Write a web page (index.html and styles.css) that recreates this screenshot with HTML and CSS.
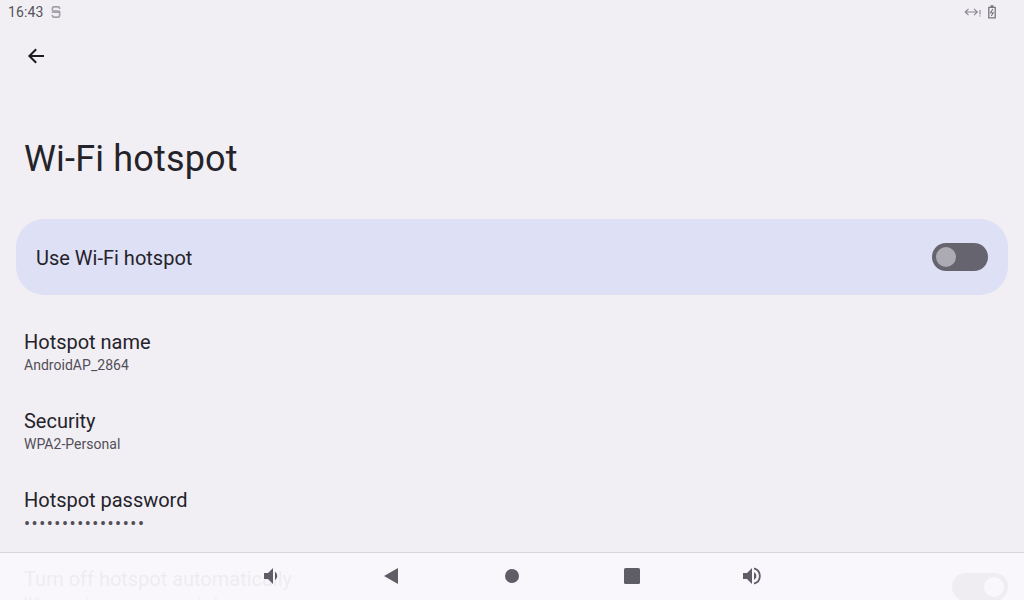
FILE: index.html
```html
<!DOCTYPE html>
<html lang="en">
<head>
<meta charset="utf-8">
<title>Wi-Fi hotspot</title>
<link rel="stylesheet" href="styles.css">
</head>
<body>
<div class="screen">
  <header class="status">
    <div class="status-left">
      <span class="clock">16:43</span>
      <svg class="status-s" viewBox="0 0 10 14" width="10" height="14"><path d="M8.600 4V3.200Q8.600 1.800 7.200 1.800H2.800Q1.400 1.800 1.400 3.200V4.800Q1.400 6.200 2.800 6.200H7.200Q8.600 6.200 8.600 7.600V10.800Q8.600 12.200 7.200 12.200H2.800Q1.400 12.200 1.400 10.800V10" fill="none" stroke="#a3a2a8" stroke-width="1.700"/><path d="M.6 7.300H9.400" stroke="#a3a2a8" stroke-width="1.300"/></svg>
    </div>
    <div class="status-right">
      <svg viewBox="0 0 18 12" width="18" height="12"><path d="M4.500 2.800 1.200 6l3.300 3.200M1.500 6H13M10 2.800 13.300 6 10 9.200" fill="none" stroke="#87868d" stroke-width="1.100"/><path d="M16 4v4.400M16 9.600v1" stroke="#87868d" stroke-width="1.100"/></svg>
      <svg viewBox="0 0 10 14" width="10" height="14"><path d="M3.500 1h3M1.800 2.400h6.400v10.400H1.800z" fill="none" stroke="#77767d" stroke-width="1.300"/><path d="M5.800 4 3.600 7.800h2.600L4.300 11" fill="none" stroke="#77767d" stroke-width="1.100"/></svg>
    </div>
  </header>

  <div class="toolbar">
    <svg class="back" viewBox="0 0 24 24" width="24" height="24"><path d="M20 12H5.600M12.200 5.200 5.400 12l6.800 6.800" fill="none" stroke="#1d1b20" stroke-width="2"/></svg>
  </div>

  <h1 class="title">Wi-Fi hotspot</h1>

  <section class="main-switch">
    <span class="main-label">Use Wi-Fi hotspot</span>
    <span class="switch switch-main"><span class="thumb"></span></span>
  </section>

  <ul class="prefs">
    <li class="pref"><span class="pref-title">Hotspot name</span><span class="pref-sub">AndroidAP_2864</span></li>
    <li class="pref"><span class="pref-title">Security</span><span class="pref-sub">WPA2-Personal</span></li>
    <li class="pref"><span class="pref-title">Hotspot password</span><span class="pref-sub pref-dots">••••••••••••••••</span></li>
    <li class="pref pref-toggle">
      <div class="pref-text"><span class="pref-title">Turn off hotspot automatically</span><span class="pref-sub pref-sub-low">When no devices are connected</span></div>
      <span class="switch switch-auto"><span class="thumb"></span></span>
    </li>
  </ul>

  <nav class="navbar">
    <svg class="vol-down" viewBox="0 0 24 24" width="24" height="24"><path d="M3 9v6h4l5 5V4L7 9z" fill="#5f5e66"/><path d="M14 7.800a5 5 0 0 1 0 8.400z" fill="#5f5e66"/></svg>
    <svg class="nav-back" viewBox="0 0 24 24" width="24" height="24"><path d="M18 4v16L4 12z" fill="#5f5e66"/></svg>
    <svg class="nav-home" viewBox="0 0 24 24" width="24" height="24"><circle cx="12" cy="12" r="7" fill="#5f5e66"/></svg>
    <svg class="nav-recent" viewBox="0 0 24 24" width="24" height="24"><rect x="4" y="4" width="16" height="16" rx="1.500" fill="#5f5e66"/></svg>
    <svg class="vol-up" viewBox="0 0 24 24" width="24" height="24"><path d="M3 9v6h4l5 5V4L7 9z" fill="#5f5e66"/><path d="M14 8a4.500 4.500 0 0 1 0 8z" fill="#5f5e66"/><path d="M14 4.300a8 8 0 0 1 0 15.400" fill="none" stroke="#5f5e66" stroke-width="1.800"/></svg>
  </nav>
</div>
</body>
</html>
```
FILE: styles.css
```css
* { box-sizing: border-box; }
html, body { margin: 0; padding: 0; }
body {
  width: 1024px;
  height: 600px;
  overflow: hidden;
  background: #f1eff4;
  font-family: Roboto, "Noto Sans", sans-serif;
  color: #25232a;
}
.screen { position: relative; width: 1024px; height: 600px; overflow: hidden; }
.status {
  height: 24px;
  padding: 0 27px 0 8px;
  display: flex;
  justify-content: space-between;
  align-items: center;
}
.status-left, .status-right { display: flex; align-items: center; }
.status-left { gap: 8px; }
.status-right { gap: 5px; }
.clock { font-size: 14px; color: #55525b; letter-spacing: 0.1px; }
.toolbar { height: 64px; padding: 20px 0 0 24px; }
.back { display: block; }
.title {
  margin: 0;
  padding: 47px 24px 0;
  height: 131px;
  font-size: 36px;
  line-height: 48px;
  font-weight: 400;
  letter-spacing: 0.17px;
}
.main-switch {
  margin: 0 16px;
  height: 76px;
  border-radius: 28px;
  background: #dee0f6;
  padding: 0 20px;
  display: flex;
  align-items: center;
  justify-content: space-between;
}
.main-label { font-size: 20px; line-height: 28px; padding-top: 2px; }
.switch {
  display: flex;
  align-items: center;
  flex: none;
  width: 56px;
  height: 28px;
  border-radius: 14px;
  padding: 0 4px;
}
.thumb { display: block; width: 20px; height: 20px; border-radius: 50%; }
.switch-main { background: #66646f; }
.switch-main .thumb { background: #acaab3; }
.switch-auto { background: #3d3b47; justify-content: flex-end; margin-top: 8px; }
.switch-auto .thumb { background: #fff; }
.prefs { list-style: none; margin: 0; padding: 33px 0 0; }
.pref {
  display: flex;
  flex-direction: column;
  height: 79px;
  padding: 0 24px;
}
.pref-title { font-size: 20px; line-height: 28px; letter-spacing: -0.02px; }
.pref-sub { font-size: 14px; line-height: 18px; color: #524e58; letter-spacing: 0.03px; }
.pref-dots { font-size: 18px; letter-spacing: 1.52px; padding-top: 1px; }
.pref-sub-low { letter-spacing: -0.14px; padding-top: 1px; }
.pref-toggle {
  flex-direction: row;
  justify-content: space-between;
  padding-right: 16px;
}
.pref-text { display: flex; flex-direction: column; }
.navbar {
  position: absolute;
  left: 0;
  right: 0;
  bottom: 0;
  height: 48px;
  background: rgba(249, 247, 251, 0.95);
  border-top: 1px solid #d6d5d9;
}
.navbar svg { position: absolute; top: 11px; }
.vol-down { left: 261px; }
.nav-back { left: 380px; }
.nav-home { left: 500px; }
.nav-recent { left: 620px; }
.vol-up { left: 740px; }
```
